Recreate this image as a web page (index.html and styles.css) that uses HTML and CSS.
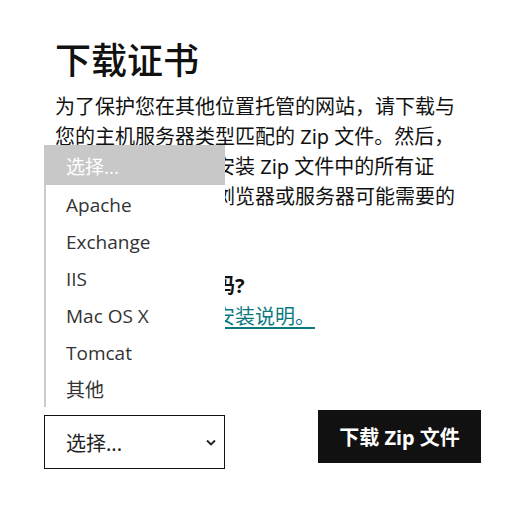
FILE: index.html
```html
<!DOCTYPE html>
<html lang="zh-CN">
<head>
<meta charset="utf-8">
<title>下载证书</title>
<link rel="stylesheet" href="styles.css">
</head>
<body>
<main class="panel">
  <h1 class="title">下载证书</h1>
  <p class="intro">为了保护您在其他位置托管的网站，请下载与您的主机服务器类型匹配的 Zip 文件。然后，请在您的服务器上安装 Zip 文件中的所有证书，其中包括您的浏览器或服务器可能需要的中间证书。</p>
  <p class="help-q">需要帮助安装证书吗?</p>
  <p class="help-link"><a href="#">请查看我们的证书安装说明。</a></p>
  <div class="actions">
    <div class="select">
      <span class="select-value">选择...</span>
      <svg class="chevron" width="10" height="7" viewBox="0 0 10 7"><path d="M1 1.5 L5 5.5 L9 1.5" fill="none" stroke="#222" stroke-width="1.8"/></svg>
    </div>
    <button class="download">下载 Zip 文件</button>
  </div>
  <ul class="options">
    <li class="opt opt-active">选择...</li>
    <li class="opt">Apache</li>
    <li class="opt">Exchange</li>
    <li class="opt">IIS</li>
    <li class="opt">Mac OS X</li>
    <li class="opt">Tomcat</li>
    <li class="opt">其他</li>
  </ul>
</main>
</body>
</html>
```
FILE: styles.css
```css
html, body {
  margin: 0;
  padding: 0;
  background: #fff;
}
body {
  font-family: "Noto Sans", "Noto Sans CJK SC", sans-serif;
  color: #111;
}
.panel {
  position: relative;
  margin-left: 44px;
  width: 437px;
  padding-top: 36px;
}
.title {
  margin: 0;
  padding-left: 11px;
  font-family: "Noto Sans CJK SC", sans-serif;
  font-size: 36px;
  font-weight: 500;
  line-height: 44px;
}
.intro {
  margin: 12px 0 0;
  padding: 0 20px 0 11px;
  font-family: "Noto Sans", "Noto Sans CJK SC", sans-serif;
  font-size: 20px;
  line-height: 30px;
}
.help-q {
  margin: 29px 0 0;
  padding-left: 11px;
  font-size: 20px;
  line-height: 30px;
  font-weight: 700;
}
.help-link {
  margin: 1px 0 0;
  padding-left: 11px;
  font-size: 20px;
  line-height: 30px;
}
.help-link a {
  color: #0b7a7e;
  text-decoration: underline;
  text-underline-offset: 3px;
  text-decoration-thickness: 2px;
}
.actions {
  margin-top: 78px;
  display: flex;
  justify-content: space-between;
  align-items: flex-start;
}
.select {
  box-sizing: border-box;
  margin-top: 5px;
  width: 181px;
  height: 54px;
  border: 1px solid #111;
  display: flex;
  align-items: center;
  justify-content: space-between;
  padding: 0 8px 0 21px;
  font-size: 20px;
  color: #222;
}
.chevron {
  display: block;
}
.download {
  width: 163px;
  height: 53px;
  border: 0;
  background: #111;
  color: #fff;
  font-family: "Noto Sans", "Noto Sans CJK SC", sans-serif;
  font-size: 20px;
  font-weight: 700;
  padding: 0;
}
.options {
  position: absolute;
  left: 0;
  top: 145px;
  width: 181px;
  margin: 0;
  padding: 0;
  list-style: none;
  background: #fff;
  box-sizing: border-box;
  border-left: 2px solid #cbcbcb;
}
.opt {
  height: 37px;
  line-height: 41px;
  padding-left: 20px;
  font-family: "Open Sans", "Noto Sans CJK SC", sans-serif;
  font-size: 19px;
  color: #333;
}
.opt-active {
  height: 40px;
  line-height: 45px;
  background: #c8c8c8;
  color: #fff;
  margin-left: -2px;
  padding-left: 22px;
}
```
